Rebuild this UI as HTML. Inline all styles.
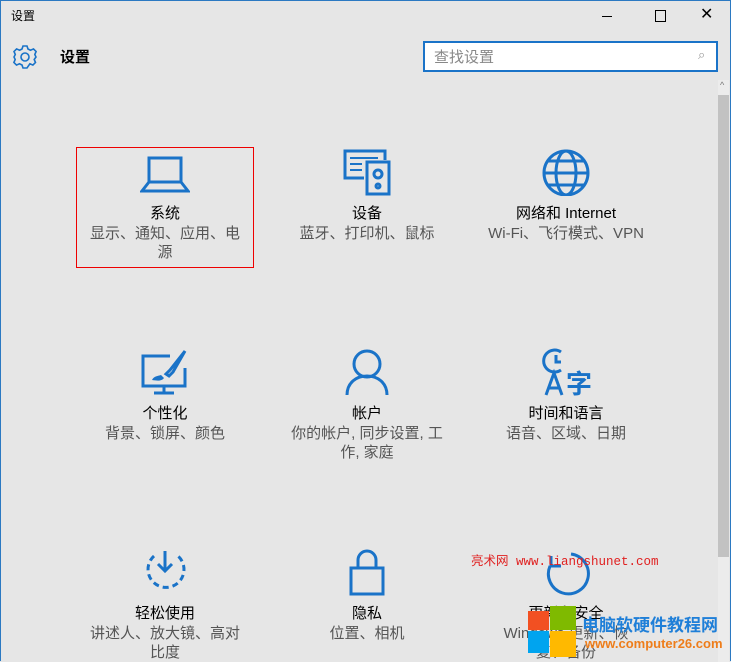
<!DOCTYPE html>
<html><head><meta charset="utf-8"><style>
body{margin:0;width:731px;height:662px;overflow:hidden;background:#e6e6e6;font-family:"Liberation Sans","Noto Sans CJK SC",sans-serif;position:relative}
.frame{position:absolute;left:0;top:0;width:729px;height:660px;border:1px solid #2b79c2;border-bottom:none}
.a{position:absolute}
.tile{position:absolute;width:180px;text-align:center;color:#000}
.tile .t{font-size:15px;line-height:20px}
.tile .s{font-size:15px;line-height:19px;color:#555}
.tile svg{display:block;margin:0 auto 8px}
</style></head><body>
<div class="frame"></div>
<div class="a" style="left:11px;top:7px;font-size:12px">设置</div>
<div class="a" style="left:602px;top:16px;width:10px;height:1px;background:#000"></div>
<div class="a" style="left:655px;top:10px;width:9px;height:10px;border:1px solid #000"></div>
<div class="a" style="left:700px;top:4px;font-size:16px">✕</div>
<svg class="a" style="left:12px;top:44px" width="26" height="26" viewBox="0 0 26 26"><g fill="none" stroke="#1a73c8" stroke-width="1.6"><path d="M11 2h4l1 3 2.5 1.2 3-1.3 2.6 2.6-1.3 3L24 13l-1.8 2.5 1.3 3-2.6 2.6-3-1.3L15 24h-4l-1-3-2.5-1.2-3 1.3-2.6-2.6 1.3-3L2 13l1.3-2.5-1.3-3L4.6 4.9l3 1.3L10 5z"/><circle cx="13" cy="13" r="4"/></g></svg>
<div class="a" style="left:60px;top:46px;font-size:15px;font-weight:bold">设置</div>
<div class="a" style="left:423px;top:41px;width:291px;height:27px;border:2px solid #1a73c8;background:#fff"></div>
<div class="a" style="left:434px;top:46px;font-size:15px;color:#888">查找设置</div>
<div class="a" style="left:698px;top:47px;font-size:13px;color:#999">⌕</div>
<div class="a" style="left:718px;top:80px;width:11px;height:582px;background:#ececec"></div>
<div class="a" style="left:718px;top:95px;width:11px;height:462px;background:#c2c2c2"></div>
<div class="a" style="left:720px;top:80px;font-size:9px;color:#777">^</div>
<div class="a" style="left:76px;top:147px;width:176px;height:119px;border:1px solid #e00"></div>

<div class="tile" style="left:75px;top:152px"><svg width="50" height="44" viewBox="0 0 50 44"><g fill="none" stroke="#1a73c8" stroke-width="3"><rect x="9" y="6" width="32" height="24"/><path d="M9 30 2 39h46l-7-9"/></g></svg><div class="t">系统</div><div class="s">显示、通知、应用、电<br>源</div></div>
<div class="tile" style="left:277px;top:148px"><svg width="50" height="48" viewBox="0 0 50 48"><g fill="none" stroke="#1a73c8" stroke-width="3"><path d="M22 30H3V3h40v9"/><rect x="25" y="14" width="22" height="32"/><circle cx="36" cy="26" r="4"/><circle cx="36" cy="38" r="2"/></g><g fill="#1a73c8"><rect x="8" y="9" width="28" height="2"/><rect x="8" y="15" width="12" height="2"/><rect x="8" y="21" width="12" height="2"/></g></svg><div class="t">设备</div><div class="s">蓝牙、打印机、鼠标</div></div>
<div class="tile" style="left:476px;top:148px"><svg width="50" height="48" viewBox="0 0 50 48"><g fill="none" stroke="#1a73c8" stroke-width="3"><circle cx="25" cy="25" r="22"/><ellipse cx="25" cy="25" rx="10" ry="22"/><path d="M3 25h44M7 13h36M7 37h36"/></g></svg><div class="t">网络和 Internet</div><div class="s">Wi-Fi、飞行模式、VPN</div></div>

<div class="tile" style="left:75px;top:348px"><svg width="50" height="48" viewBox="0 0 50 48"><g fill="none" stroke="#1a73c8" stroke-width="3"><path d="M30 8H3v30h42V20M24 38v6M14 45h20"/><path d="M45 3 30 22l-4 4 3 2 4-4z"/></g><path d="M12 32c2-4 6-4 9-5l3 3c-2 3-6 3-12 2z" fill="#1a73c8"/></svg><div class="t">个性化</div><div class="s">背景、锁屏、颜色</div></div>
<div class="tile" style="left:277px;top:348px"><svg width="50" height="48" viewBox="0 0 50 48"><g fill="none" stroke="#1a73c8" stroke-width="3"><circle cx="25" cy="16" r="13"/><path d="M5 47c0-12 9-19 20-19s20 7 20 19"/></g></svg><div class="t">帐户</div><div class="s">你的帐户, 同步设置, 工<br>作, 家庭</div></div>
<div class="tile" style="left:476px;top:348px"><svg width="50" height="48" viewBox="0 0 50 48"><g fill="none" stroke="#1a73c8" stroke-width="3"><path d="M20 22A11 11 0 1 1 20 4"/><path d="M15 7v7h5"/><path d="M5 47l8-22 8 22M8 40h10"/></g><text x="25" y="45" font-size="26" fill="#1a73c8" font-family="Noto Sans CJK SC" font-weight="bold">字</text></svg><div class="t">时间和语言</div><div class="s">语音、区域、日期</div></div>

<div class="tile" style="left:75px;top:548px"><svg width="50" height="48" viewBox="0 0 50 48"><g fill="none" stroke="#1a73c8" stroke-width="3"><path d="M25 3v20M18 16l7 7 7-7"/><path d="M14 8a18 18 0 1 0 24 0" stroke-dasharray="6 4"/></g></svg><div class="t">轻松使用</div><div class="s">讲述人、放大镜、高对<br>比度</div></div>
<div class="tile" style="left:277px;top:548px"><svg width="50" height="48" viewBox="0 0 50 48"><g fill="none" stroke="#1a73c8" stroke-width="3"><path d="M16 20v-8a9 9 0 0 1 18 0v8"/><rect x="9" y="20" width="32" height="26"/></g></svg><div class="t">隐私</div><div class="s">位置、相机</div></div>
<div class="tile" style="left:476px;top:548px"><svg width="50" height="48" viewBox="0 0 50 48"><g fill="none" stroke="#1a73c8" stroke-width="3"><path d="M30 6A20 20 0 1 1 9 18"/><path d="M10 8v10h10"/></g></svg><div class="t">更新和安全</div><div class="s">Windows 更新、恢<br>复、备份</div></div>

<div class="a" style="left:471px;top:550px;font-size:12.5px;color:#e02020;font-family:'Liberation Mono','Noto Sans CJK SC',monospace;white-space:nowrap">亮术网 www.liangshunet.com</div>
<div class="a" style="left:528px;top:611px;width:21px;height:19px;background:#f25022"></div>
<div class="a" style="left:550px;top:606px;width:26px;height:24px;background:#7fba00"></div>
<div class="a" style="left:528px;top:631px;width:21px;height:22px;background:#00a4ef"></div>
<div class="a" style="left:550px;top:631px;width:26px;height:26px;background:#ffb900"></div>
<div class="a" style="left:582px;top:611px;font-size:17px;font-weight:bold;color:#1f7fd8;white-space:nowrap">电脑软硬件教程网</div>
<div class="a" style="left:585px;top:636px;font-size:13px;font-weight:bold;color:#ee7d1a;white-space:nowrap">www.computer26.com</div>
</body></html>
